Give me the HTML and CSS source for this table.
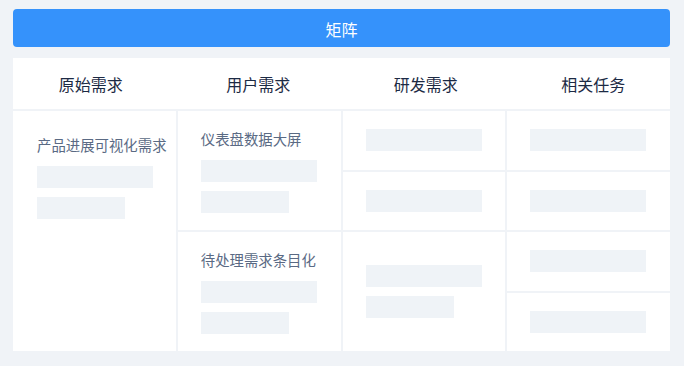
FILE: index.html
```html
<!DOCTYPE html>
<html lang="zh-CN">
<head>
  <meta charset="UTF-8" />
  <meta name="viewport" content="width=device-width, initial-scale=1.0">
  <title>矩阵</title>
  <link rel="stylesheet" href="styles.css">
</head>
<body>
  <div class="title-bar">矩阵</div>

  <div class="matrix">
    <div class="matrix-head">
      <div class="head-labels">
        <div>原始需求</div>
        <div>用户需求</div>
        <div>研发需求</div>
        <div>相关任务</div>
      </div>
    </div>

    <!-- 原始需求 -->
    <div class="cell cell-top c1 r-all">
      <div class="cell-text">产品进展可视化需求</div>
      <div class="bar"></div>
      <div class="bar short"></div>
    </div>

    <!-- 用户需求 -->
    <div class="cell c2 r12">
      <div class="cell-text">仪表盘数据大屏</div>
      <div class="bar"></div>
      <div class="bar short"></div>
    </div>
    <div class="cell c2 r34">
      <div class="cell-text">待处理需求条目化</div>
      <div class="bar"></div>
      <div class="bar short"></div>
    </div>

    <!-- 研发需求 -->
    <div class="cell c3 r1"><div class="bar"></div></div>
    <div class="cell c3 r2"><div class="bar"></div></div>
    <div class="cell c3 r34">
      <div class="bar"></div>
      <div class="bar short"></div>
    </div>

    <!-- 相关任务 -->
    <div class="cell c4 r1"><div class="bar"></div></div>
    <div class="cell c4 r2"><div class="bar"></div></div>
    <div class="cell c4 r3"><div class="bar"></div></div>
    <div class="cell c4 r4"><div class="bar"></div></div>
  </div>
</body>
</html>
```

FILE: styles.css
```css
body {
  margin: 0;
  padding: 9px 14px 15px 13px;
  background: #f0f3f7;
  font-family: "Noto Sans CJK SC", "Noto Sans", sans-serif;
}

.title-bar {
  height: 38px;
  line-height: 40px;
  border-radius: 4px;
  background: #3592fb;
  color: #fff;
  font-size: 16px;
  text-align: center;
}

.matrix {
  margin-top: 11px;
  height: 293px;
  display: grid;
  grid-template-columns: repeat(4, minmax(0, 1fr));
  grid-template-rows: 51px repeat(4, 1fr);
  gap: 2px;
}

.matrix-head {
  grid-column: 1 / -1;
  display: flex;
  align-items: center;
  background: #fff;
  color: #1c2a44;
  font-size: 16px;
}
.head-labels {
  flex: 1;
  margin: 0 -7px 0 -6px;
  display: grid;
  grid-template-columns: repeat(4, 1fr);
  text-align: center;
}

.cell {
  background: #fff;
  padding: 0 23px;
  display: flex;
  flex-direction: column;
  justify-content: center;
}
.cell-top { justify-content: flex-start; padding: 23px 23px 0 24px; }

.c1 { grid-column: 1; }
.c2 { grid-column: 2; }
.c3 { grid-column: 3; }
.c4 { grid-column: 4; }
.r-all { grid-row: 2 / 6; }
.r12 { grid-row: 2 / 4; }
.r34 { grid-row: 4 / 6; }
.r1 { grid-row: 2; }
.r2 { grid-row: 3; }
.r3 { grid-row: 4; }
.r4 { grid-row: 5; }

.cell-text {
  font-size: 14.4px;
  line-height: 22px;
  color: #5a6a84;
  white-space: nowrap;
  margin-bottom: 10px;
}

.bar {
  width: 116px;
  height: 22px;
  background: #eff3f7;
}
.bar + .bar { margin-top: 9px; }
.bar.short { width: 88px; }
```
